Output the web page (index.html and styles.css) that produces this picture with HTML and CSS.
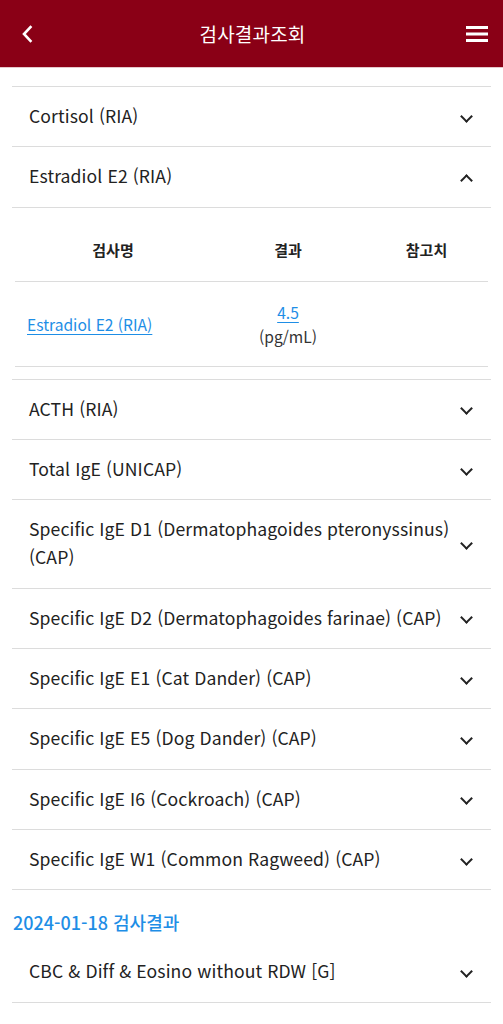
FILE: index.html
```
<!DOCTYPE html>
<html lang="ko">
<head>
<meta charset="utf-8">
<link rel="stylesheet" href="styles.css">
</head>
<body>
<header class="topbar">
  <svg class="back" width="12" height="18" viewBox="0 0 12 18"><path d="M9.5 2 L3 9 L9.5 16" fill="none" stroke="#fff" stroke-width="2.6" stroke-linecap="square"/></svg>
  <h1 class="title">검사결과조회</h1>
  <svg class="menu" width="22" height="18" viewBox="0 0 22 18"><rect x="0" y="1" width="22" height="3" fill="#fff"/><rect x="0" y="7.5" width="22" height="3" fill="#fff"/><rect x="0" y="14" width="22" height="3" fill="#fff"/></svg>
</header>
<main class="content">
  <ul class="list">
    <li class="item"><span class="name">Cortisol (RIA)</span><span class="chev down"></span></li>
    <li class="item open">
      <div class="item-head"><span class="name">Estradiol E2 (RIA)</span><span class="chev up"></span></div>
      <div class="detail">
        <div class="trow thead"><div class="c1">검사명</div><div class="c2">결과</div><div class="c3">참고치</div></div>
        <div class="trow tbody"><div class="c1 left"><a class="link">Estradiol E2 (RIA)</a></div><div class="c2"><a class="link">4.5</a><div class="unit">(pg/mL)</div></div><div class="c3"></div></div>
      </div>
    </li>
    <li class="item"><span class="name">ACTH (RIA)</span><span class="chev down"></span></li>
    <li class="item"><span class="name">Total IgE (UNICAP)</span><span class="chev down"></span></li>
    <li class="item"><span class="name">Specific IgE D1 (Dermatophagoides pteronyssinus) (CAP)</span><span class="chev down"></span></li>
    <li class="item"><span class="name">Specific IgE D2 (Dermatophagoides farinae) (CAP)</span><span class="chev down"></span></li>
    <li class="item"><span class="name">Specific IgE E1 (Cat Dander) (CAP)</span><span class="chev down"></span></li>
    <li class="item"><span class="name">Specific IgE E5 (Dog Dander) (CAP)</span><span class="chev down"></span></li>
    <li class="item"><span class="name">Specific IgE I6 (Cockroach) (CAP)</span><span class="chev down"></span></li>
    <li class="item"><span class="name">Specific IgE W1 (Common Ragweed) (CAP)</span><span class="chev down"></span></li>
  </ul>
  <h2 class="date">2024-01-18 검사결과</h2>
  <ul class="list second">
    <li class="item"><span class="name">CBC &amp; Diff &amp; Eosino without RDW [G]</span><span class="chev down"></span></li>
    <li class="item"><span class="name">ESR</span><span class="chev down"></span></li>
  </ul>
</main>
</body>
</html>
```
FILE: styles.css
```
* { box-sizing: border-box; }
html, body { margin: 0; padding: 0; }
body {
  width: 503px;
  height: 1024px;
  overflow: hidden;
  background: #fff;
  font-family: "Noto Sans CJK KR", "Noto Sans", sans-serif;
  color: #222;
}
.topbar {
  height: 68px;
  background: #8a0016;
  display: flex;
  align-items: center;
  justify-content: space-between;
  padding: 0 15px 0 21px;
  border-bottom: 1px solid #e6c8cc;
}
.title {
  margin: 0 0 0 6px;
  font-size: 19px;
  font-weight: 400;
  color: #fff;
  letter-spacing: 0.2px;
}
.back { display: block; }
.menu { display: block; }
.content { padding: 18px 12px 0; }
.list { list-style: none; margin: 0; padding: 0; border-top: 1px solid #dcdcdc; }
.list.second { border-top: 0; }
.item {
  border-bottom: 1px solid #dcdcdc;
  display: flex;
  align-items: center;
  justify-content: space-between;
  padding: 15px 19px 16px 17px;
  font-size: 17.6px;
  line-height: 28.3px;
  letter-spacing: 0.1px;
}
.item.open { display: block; padding: 0; }
.item-head {
  display: flex;
  align-items: center;
  justify-content: space-between;
  padding: 15px 19px 16px 17px;
}
.name { flex: 1; padding-right: 8px; }
.chev {
  width: 9px;
  height: 9px;
  border-right: 2px solid #222;
  border-bottom: 2px solid #222;
  flex: none;
  margin-right: 1px;
}
.chev.down { transform: rotate(45deg); margin-top: 0; }
.chev.up { transform: rotate(-135deg); margin-top: 8px; }
.detail {
  border-top: 1px solid #dcdcdc;
  padding: 0 3px 12px;
  letter-spacing: 0;
}
.trow {
  display: grid;
  grid-template-columns: 196px 154px 1fr;
  border-bottom: 1px solid #dcdcdc;
  align-items: center;
  text-align: center;
}
.thead {
  padding: 30px 0 19px;
  font-size: 15px;
  line-height: 24px;
  font-weight: 700;
  color: #222;
}
.tbody {
  padding: 17px 0 17px;
  font-size: 15.6px;
  line-height: 24px;
  height: 85px;
}
.left { text-align: left; padding-left: 12px; }
.link {
  color: #1e8ee6;
  text-decoration: underline;
  text-underline-offset: 3px;
}
.unit { color: #333; }
.date {
  margin: 0;
  padding: 20px 1px 7px;
  font-size: 18px;
  line-height: 25px;
  font-weight: 500;
  color: #1e8ee6;
}
```
